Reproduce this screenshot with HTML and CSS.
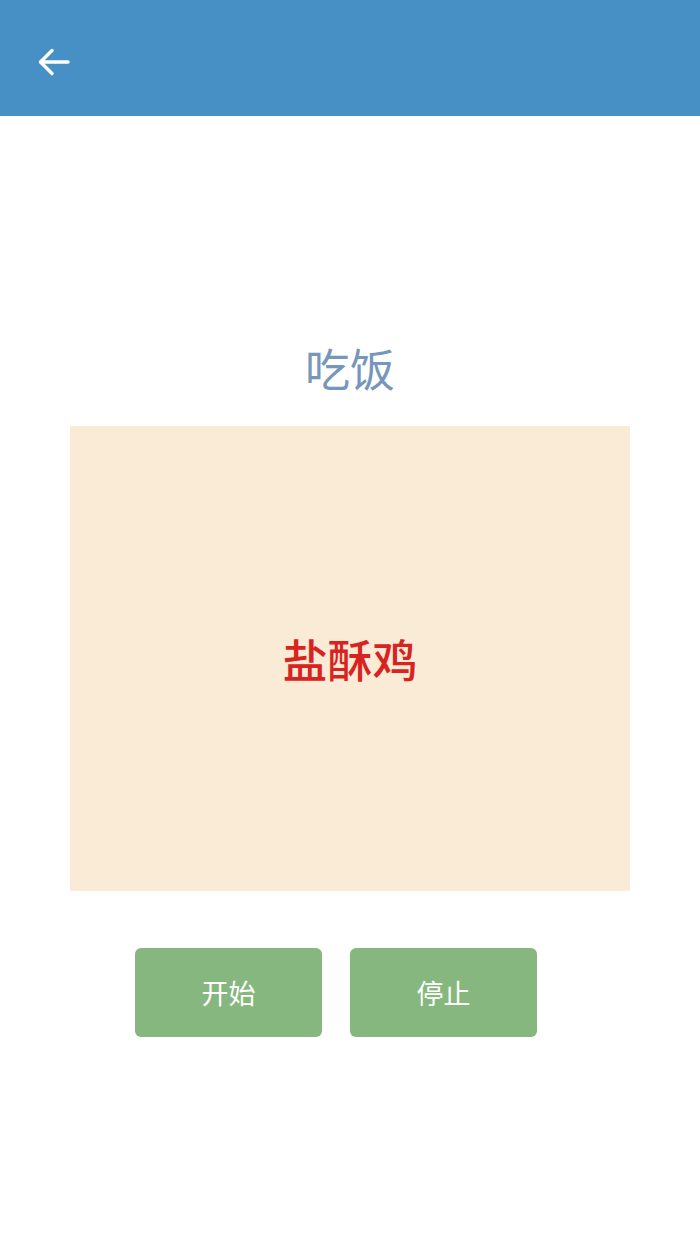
FILE: index.html
```html
<!DOCTYPE html>
<html lang="zh">
<head>
<meta charset="utf-8">
<title>吃饭</title>
<link rel="stylesheet" href="styles.css">
</head>
<body>
<header class="appbar">
  <button class="back" aria-label="返回">
    <svg width="34" height="34" viewBox="0 0 34 34" fill="none" stroke="#fff" stroke-width="3.4" stroke-linecap="round" stroke-linejoin="round">
      <path d="M31 17H4"/>
      <path d="M15 5.5L3.5 17L15 28.5"/>
    </svg>
  </button>
</header>
<main class="content">
  <h1 class="title">吃饭</h1>
  <div class="result"><span class="dish">盐酥鸡</span></div>
  <div class="actions">
    <button class="btn">开始</button>
    <button class="btn">停止</button>
  </div>
</main>
</body>
</html>
```

FILE: styles.css
```css
html, body {
  margin: 0;
  padding: 0;
  background: #ffffff;
  font-family: "Noto Sans CJK SC", "Noto Sans", sans-serif;
}

.appbar {
  height: 116px;
  background: #4790c6;
  display: flex;
  align-items: center;
  padding-left: 37px;
  box-sizing: border-box;
}

.back {
  background: none;
  border: none;
  padding: 0;
  width: 34px;
  height: 34px;
  display: flex;
  align-items: center;
  justify-content: center;
  margin-top: 8px;
}

.content {
  display: flex;
  flex-direction: column;
  align-items: center;
}

.title {
  margin: 222px 0 0;
  height: 60px;
  line-height: 60px;
  font-size: 45px;
  font-weight: 400;
  color: #7896bb;
}

.result {
  margin-top: 28px;
  width: 560px;
  height: 465px;
  background: #faebd7;
  display: flex;
  align-items: center;
  justify-content: center;
}

.dish {
  font-size: 45px;
  line-height: 60px;
  color: #d8231f;
  font-weight: 500;
}

.actions {
  margin-top: 57px;
  display: flex;
  gap: 28px;
  padding-right: 28px;
}

.btn {
  width: 187px;
  height: 89px;
  border: none;
  border-radius: 6px;
  background: #86b77e;
  color: #ffffff;
  font-family: "Noto Sans CJK SC", "Noto Sans", sans-serif;
  font-size: 27px;
  padding: 0;
}
```
